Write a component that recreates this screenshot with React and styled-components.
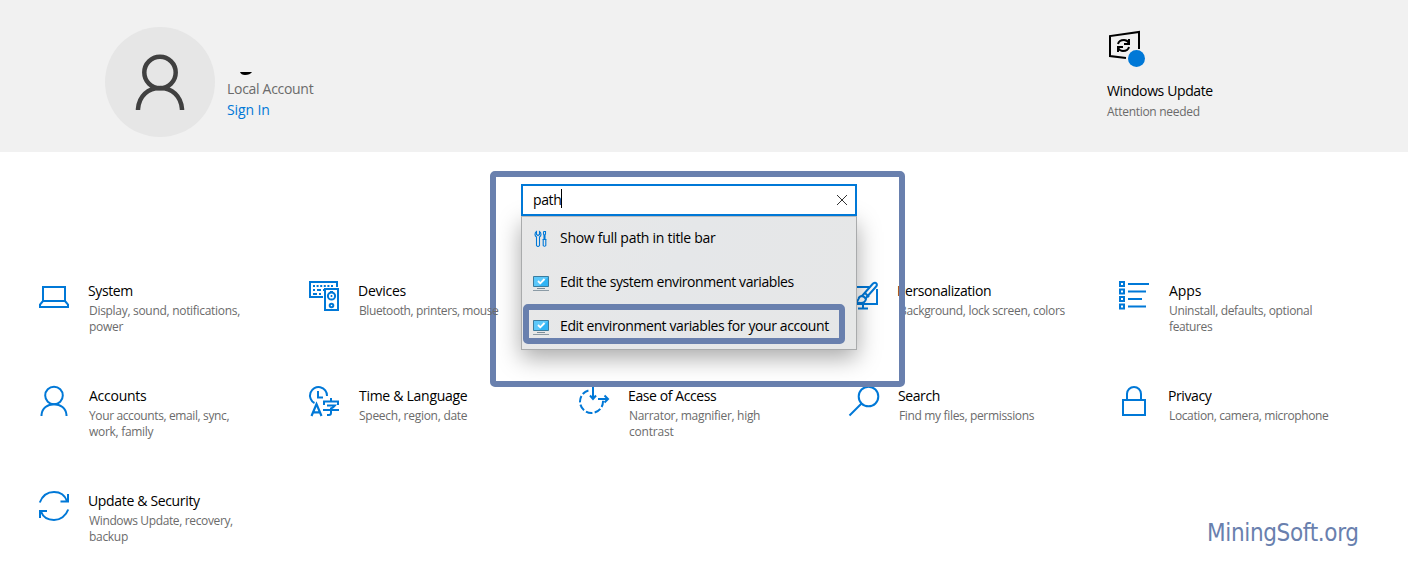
import React from "react";
import styled, { createGlobalStyle } from "styled-components";

const BLUE = "#0078d7";
const FRAME = "#6980ae";

const Global = createGlobalStyle`
  * { box-sizing: border-box; }
  body { margin: 0; background: #fff; font-family: "Open Sans", "Noto Sans", sans-serif; color: #000; }
`;

const Page = styled.div`
  position: relative;
  width: 1408px;
  height: 584px;
  overflow: hidden;
  background: #fff;
`;

const Header = styled.header`
  display: flex;
  justify-content: space-between;
  height: 152px;
  padding: 27px 195px 0 105px;
  background: #f1f1f1;
`;

const Account = styled.div`
  display: flex;
  gap: 12px;
`;

const Avatar = styled.div`
  width: 110px;
  height: 110px;
  border-radius: 50%;
  background: #e6e6e6;
`;

const AccountInfo = styled.div`
  display: flex;
  flex-direction: column;
  padding-top: 45px;
`;

const NameMark = styled.svg`
  display: block;
  margin-left: 13px;
`;

const Line = styled.span`
  display: block;
  width: max-content;
  white-space: nowrap;
  font-size: ${(p) => p.$size || 14}px;
  line-height: ${(p) => p.$lh || 20}px;
  letter-spacing: ${(p) => p.$ls || 0}px;
  color: ${(p) => p.$color || "#000"};
`;

const Title = styled(Line)`
  margin-left: ${(p) => p.$indent || 0}px;
`;

const UpdateStatus = styled.div`
  display: flex;
  flex-direction: column;
  width: 106px;
`;

const UpdateIcon = styled.svg`
  display: block;
  margin: 3px 0 11px 1px;
`;

const Grid = styled.main`
  display: grid;
  grid-template-columns: repeat(5, 270px);
  grid-auto-rows: 105px;
  padding: 129px 0 0 39px;
`;

const Category = styled.section`
  position: relative;
  z-index: ${(p) => (p.$raised ? 1 : 0)};
  display: flex;
  gap: 19px;
`;

const Description = styled.div`
  padding: 2px 0 0 1px;
`;

const CategoryIcon = styled.svg`
  flex: none;
  width: 30px;
  height: 30px;
  overflow: visible;
`;

const SearchFrame = styled.div`
  position: absolute;
  left: 490px;
  top: 171px;
  width: 415px;
  height: 216px;
  padding: 7px 0 0 25px;
  border: 6px solid ${FRAME};
  border-radius: 5px;
`;

const SearchBox = styled.div`
  width: 336px;
`;

const Field = styled.div`
  position: relative;
  z-index: 1;
  display: flex;
  align-items: center;
  height: 32px;
  padding: 0 8px 0 10px;
  border: 2px solid ${BLUE};
  background: #fff;

  ${Line} {
    padding-bottom: 1px;
  }
`;

const Caret = styled.i`
  width: 1px;
  height: 19px;
  margin: 0 auto 3px 0;
  background: #000;
`;

const Results = styled.div`
  height: 134px;
  border: 1px solid #a9abac;
  border-top-color: #b9bbbd;
  background: linear-gradient(115deg, #e8e8e8, #e5e7e9 45%, #e6e7e7);
  box-shadow: 0 8px 22px rgba(0, 0, 0, 0.34);
`;

const Result = styled.div`
  display: flex;
  align-items: center;
  gap: 10px;
  height: 44px;
  padding-left: 11px;

  ${Line} {
    padding-bottom: 2px;
  }
`;

const ResultIcon = styled.svg`
  flex: none;
  width: 17px;
  height: 18px;
`;

const Highlight = styled.div`
  position: absolute;
  left: 523px;
  top: 304px;
  width: 322px;
  height: 40px;
  border: 6px solid ${FRAME};
  border-radius: 5px;
`;

const Brand = styled.div`
  position: absolute;
  left: 1207px;
  top: 516px;
  font-family: "DejaVu Sans Condensed", "DejaVu Sans", sans-serif;
  font-stretch: condensed;
  font-size: 24px;
  line-height: 34px;
  letter-spacing: -0.35px;
  color: ${FRAME};
`;

const s = { fill: "none", stroke: BLUE, strokeWidth: 2 };

const icons = {
  system: (
    <g {...s}>
      <path d="M4 6h22v14H4zM4 20l-3 3.6V26h28v-2.4L26 20" />
    </g>
  ),
  devices: (
    <g {...s}>
      <path d="M14 16H1V1h27v5" />
      <path d="M4 5h21" strokeDasharray="2 1.6" />
      <path d="M4 9h2M8 9h4M4 13h4M10 13h2M14 9h1" />
      <path d="M16 8h13v21H16z" />
      <circle cx="22.5" cy="15" r="3.6" />
      <path d="M21.7 15h1.6" />
      <circle cx="22.5" cy="24.5" r="1.8" />
      <path d="M21 10.5h3" strokeWidth="1" />
    </g>
  ),
  personalization: (
    <g {...s}>
      <path d="M20 6H1v17h27V8M14 23v4M9 27.5h10" />
      <path d="M13 15 24 2.5q2.2-1.7 3.5 0 1 1.8-.6 3.3L16.5 17.5" />
      <path d="M12.5 15q2.6 0 4.5 3-1 4-5 4-3.500 0-5-1.500 2-.5 2.500-2.500.5-2.500 3-3z" />
      <path d="M16 12l4 4" />
    </g>
  ),
  apps: (
    <g {...s}>
      <path d="M1 1h4v4H1zM1 8.500h4v4H1zM1 16h4v4H1zM1 23.500h4v4H1z" />
      <path d="M9 3h21M9 10.500h18M9 18h14M9 25.500h18" />
    </g>
  ),
  accounts: (
    <g {...s}>
      <circle cx="15" cy="9.500" r="8.800" />
      <path d="M2.500 30v-1C3 22 8.500 18.300 15 18.300S27 22 27.500 29v1" />
    </g>
  ),
  time: (
    <g {...s}>
      <path d="M5.500 17A8.500 8.500 0 1 1 18 10" />
      <path d="M9 5v6.500h5" />
      <path d="M2.500 30 7.500 18 12.500 30M4.300 26.300h6.500" strokeWidth="2.200" />
      <path d="M22 12v3M15 19v-3.500h14V19M18 19.500h8q-1.500 2-4 3V27q0 2-2 2h-2M14 24h16" />
    </g>
  ),
  ease: (
    <g {...s}>
      <circle cx="12.500" cy="15.500" r="11.500" strokeDasharray="6.700 2.300" strokeDashoffset="1" />
      <path d="M11 -1h17v15H11z" fill="#fff" stroke="none" />
      <path d="M14 0v13M11 9.500l3 3.500 3-3.500M19 13h10M25.500 9.500 29 13l-3.500 3.500" />
    </g>
  ),
  search: (
    <g {...s}>
      <circle cx="19.500" cy="10.500" r="9.800" />
      <path d="M12.500 17.500.5 29.500" />
    </g>
  ),
  privacy: (
    <g {...s}>
      <path d="M4 14h22v15H4zM8 14V8a7 7 0 0 1 14 0v6" />
    </g>
  ),
  update: (
    <g {...s}>
      <path d="M.8 11.500C3.500 4.500 9 1 15 1c6 0 11 3.500 13 9M29 3v7.500h-7.500M29.200 18.500C27 25 21 29 15 29 9 29 4 26 2 20.500M1 27v-7h7" />
    </g>
  ),
};

const categories = [
  { icon: "system", title: "System", ls: -0.4, lines: [["Display, sound, notifications,", -0.3], ["power", -0.3]] },
  { icon: "devices", title: "Devices", ls: -0.25, raised: true, lines: [["Bluetooth, printers, mouse", -0.41]] },
  null,
  { icon: "personalization", title: "Personalization", indent: -1, ls: -0.42, lines: [["Background, lock screen, colors", -0.33]] },
  { icon: "apps", title: "Apps", indent: 1, ls: -0.1, lines: [["Uninstall, defaults, optional", -0.34], ["features", -0.4]] },
  { icon: "accounts", title: "Accounts", indent: 1, ls: -0.25, lines: [["Your accounts, email, sync,", -0.38], ["work, family", -0.3]] },
  { icon: "time", title: "Time & Language", indent: 1, ls: -0.28, lines: [["Speech, region, date", -0.27]] },
  { icon: "ease", title: "Ease of Access", ls: -0.4, lines: [["Narrator, magnifier, high", -0.3], ["contrast", -0.2]] },
  { icon: "search", title: "Search", ls: -0.4, lines: [["Find my files, permissions", -0.34]] },
  { icon: "privacy", title: "Privacy", ls: -0.4, lines: [["Location, camera, microphone", -0.38]] },
  { icon: "update", title: "Update & Security", ls: -0.34, lines: [["Windows Update, recovery,", -0.36], ["backup", -0.3]] },
];

const ToolsIcon = () => (
  <ResultIcon viewBox="0 0 17 18" fill="none" stroke={BLUE} strokeWidth="1.100">
    <path d="M3.500 1.500v3l1.500 1 1.500-1v-3Q8 2.500 8 4.500q0 1.500-1.500 2.500v8.500q-1.500 2-3 0V7Q2 6 2 4.500q0-2 1.500-3zM10.500 1.500h2v2.500l-.5 1v4M10.500 1.500V4l.5 1v4M9.500 9.500h4M10.200 10v5.500q1.300 1.600 2.600 0V10" />
  </ResultIcon>
);

const MonitorIcon = () => (
  <ResultIcon viewBox="0 0 17 18">
    <path d="M.5 2.500h15v10H.5z" fill="#31b4f5" stroke="#3b7c9e" />
    <path d="M1 3h14L6 12H1z" fill="#5cc8fa" />
    <path d="m5 7 2.300 2.300L11.500 5" fill="none" stroke="#fff" strokeWidth="1.800" />
    <path d="M4 14h8v1H4z" fill="#7d8d98" />
    <path d="M0 16h16v1H0z" fill="#8b9ba6" />
  </ResultIcon>
);

export default function App() {
  return (
    <Page>
      <Global />
      <Header>
        <Account>
          <Avatar>
            <svg width="110" height="110" fill="none" stroke="#404040" strokeWidth="4.500">
              <circle cx="55" cy="45.500" r="15.700" />
              <path d="M33 83v-1C34 69 43 61 55 61s21 8 22 21v1" />
            </svg>
          </Avatar>
          <AccountInfo>
            <NameMark width="13" height="7">
              <path d="M0 0h12Q10 3 5 3 1 3 0 0z" />
            </NameMark>
            <Line $color="#6b6b6b" $lh={20} $ls={-0.3}>Local Account</Line>
            <Line $color={BLUE} $lh={22} $ls={-0.1}>Sign In</Line>
          </AccountInfo>
        </Account>
        <UpdateStatus>
          <UpdateIcon width="38" height="40" fill="none" stroke="#000" strokeWidth="2">
            <path d="M18 28 2 26V6l29-4v17" />
            <path d="M10 14q1-4 6-4 3 0 5 3M21 9v5h-5M21 17q-1 4-6 4-3 0-5-3M10 22v-5h5" />
            <circle cx="28.500" cy="28.500" r="8.500" fill={BLUE} stroke="none" />
          </UpdateIcon>
          <Line $ls={-0.38} $lh={20}>Windows Update</Line>
          <Line $size={12} $lh={22} $ls={-0.3} $color="#6b6b6b">Attention needed</Line>
        </UpdateStatus>
      </Header>

      <Grid>
        {categories.map((c, i) =>
          c ? (
            <Category key={c.title} $raised={c.raised}>
              <CategoryIcon viewBox="0 0 30 30">{icons[c.icon]}</CategoryIcon>
              <div>
                <Title $ls={c.ls} $indent={c.indent}>{c.title}</Title>
                <Description>
                  {c.lines.map(([text, ls]) => (
                    <Line key={text} $size={12} $lh={16} $ls={ls} $color="#6b6b6b">{text}</Line>
                  ))}
                </Description>
              </div>
            </Category>
          ) : (
            <div key={i} />
          )
        )}
      </Grid>

      <SearchFrame>
        <SearchBox>
          <Field>
            <Line $ls={-0.4}>path</Line>
            <Caret />
            <svg width="10" height="10" stroke="#333" fill="none">
              <path d="M0 0l10 10M10 0 0 10" />
            </svg>
          </Field>
          <Results>
            <Result><ToolsIcon /><Line $ls={-0.28}>Show full path in title bar</Line></Result>
            <Result><MonitorIcon /><Line $ls={-0.43}>Edit the system environment variables</Line></Result>
            <Result><MonitorIcon /><Line $ls={-0.4}>Edit environment variables for your account</Line></Result>
          </Results>
        </SearchBox>
      </SearchFrame>
      <Highlight />
      <Brand>MiningSoft.org</Brand>
    </Page>
  );
}
